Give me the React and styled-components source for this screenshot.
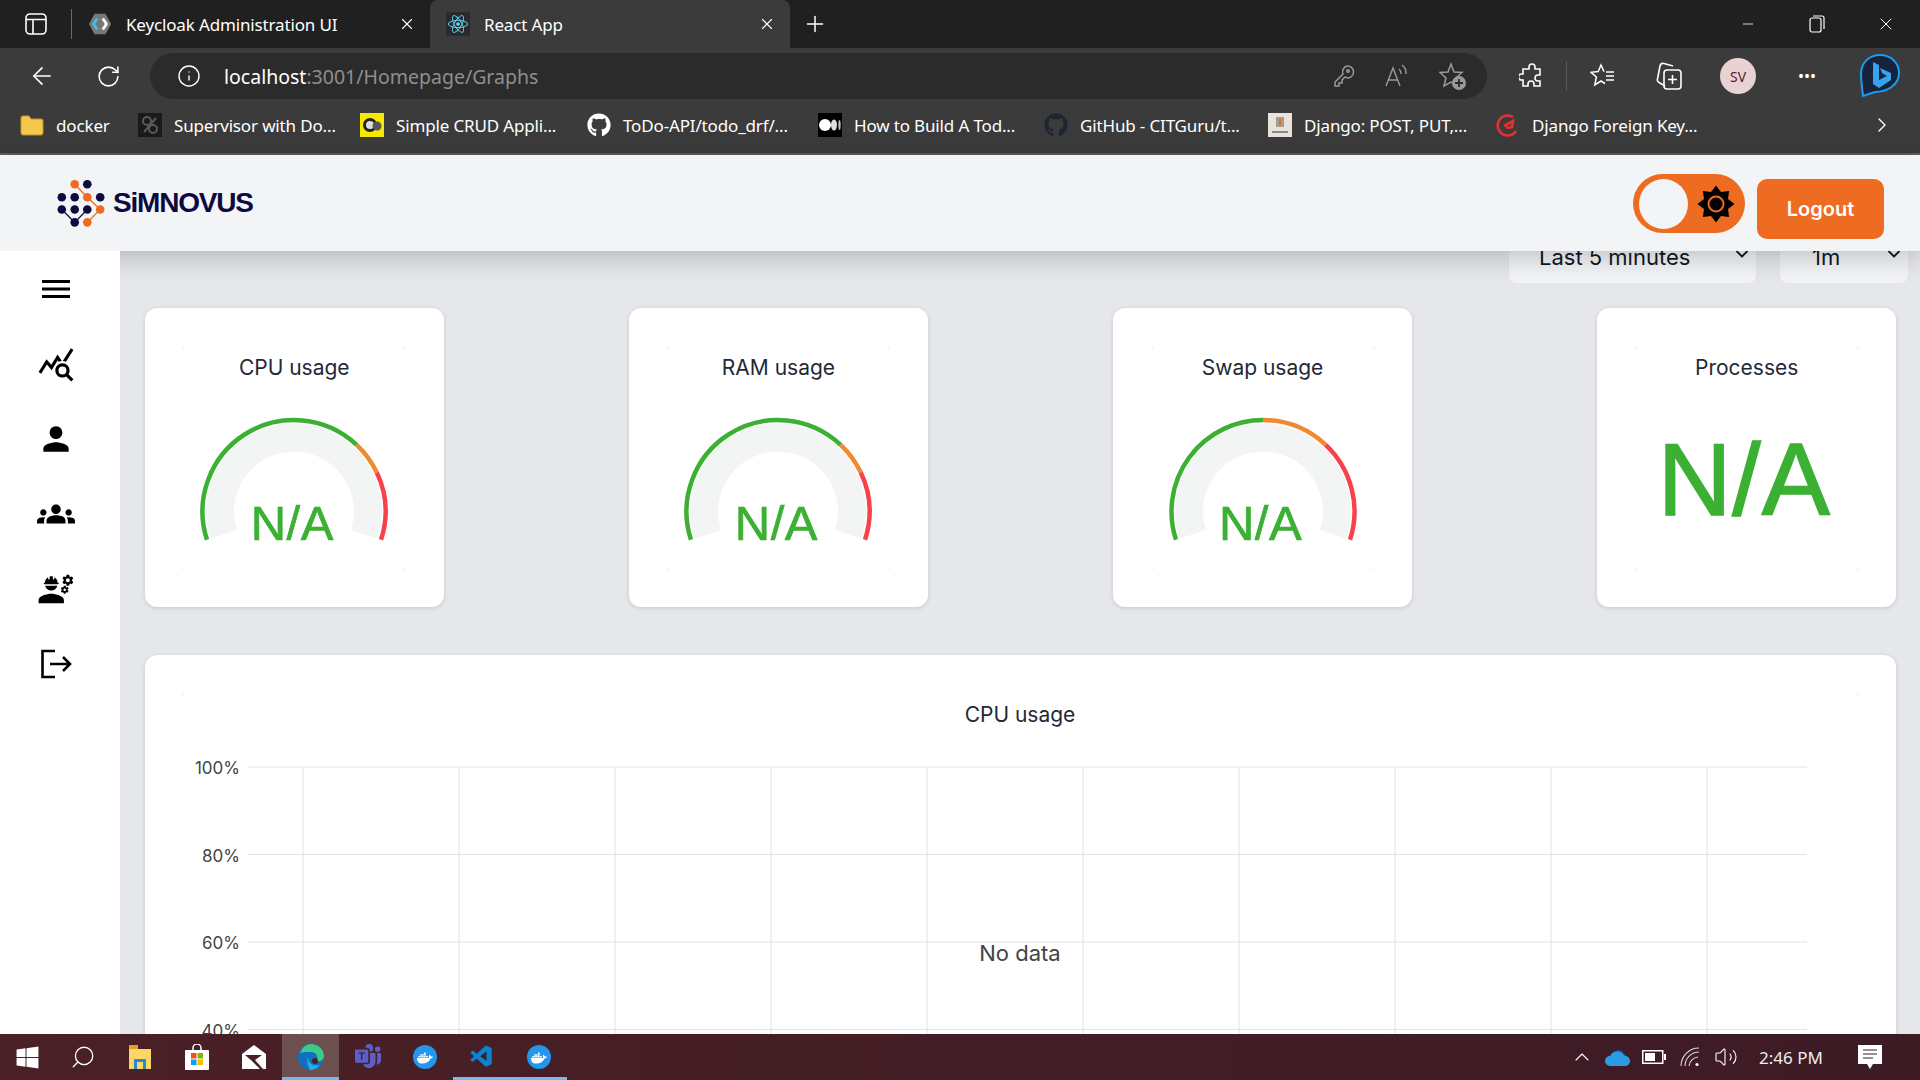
import React from "react";
import styled, { createGlobalStyle } from "styled-components";
import { ArrowLeft, RotateCw, Info, X, Plus, Minus, ChevronRight, ChevronDown, ChevronUp, Search, Volume2 } from "lucide-react";
import { FaGithub, FaWindows, FaDocker, FaReact } from "react-icons/fa";
import { BsMicrosoftTeams } from "react-icons/bs";
import { MdQueryStats, MdPerson, MdGroups, MdEngineering } from "react-icons/md";
import { VscVscode } from "react-icons/vsc";

const GlobalStyle = createGlobalStyle`
  html, body {
    margin: 0;
    padding: 0;
    background: #e5e7eb;
  }
  * {
    box-sizing: border-box;
  }
`;

const Screen = styled.div`
  width: 1920px;
  height: 1080px;
  display: flex;
  flex-direction: column;
  overflow: hidden;
  font-family: Inter, "Liberation Sans", sans-serif;
`;

/* browser chrome */
const Chrome = styled.div`
  flex: none;
  color: #fff;
  font-family: "Noto Sans", "Open Sans", sans-serif;
`;

const TabStrip = styled.div`
  height: 48px;
  background: #202020;
  display: flex;
  align-items: stretch;
`;

const StripIcon = styled.div`
  flex: none;
  width: ${(p) => p.$w}px;
  display: flex;
  align-items: center;
  justify-content: center;
`;

const Divider = styled.div`
  flex: none;
  width: 1px;
  height: 30px;
  align-self: center;
  background: ${(p) => p.$color || "#6a6a6a"};
`;

const Tab = styled.div`
  flex: none;
  width: ${(p) => p.$w}px;
  display: flex;
  align-items: center;
  gap: 14px;
  padding: 0 14px 0 16px;
  border-radius: 8px 8px 0 0;
  background: ${(p) => (p.$active ? "#3b3b3b" : "transparent")};
`;

const TabTitle = styled.span`
  flex: 1;
  font-size: 17px;
  letter-spacing: -0.15px;
  white-space: nowrap;
`;

const WindowControls = styled.div`
  margin-left: auto;
  display: flex;
`;

const WindowButton = styled.div`
  width: 69px;
  display: flex;
  align-items: center;
  justify-content: center;
`;

const Toolbar = styled.div`
  height: 52px;
  padding-top: 4px;
  background: #3b3b3b;
  display: flex;
  align-items: center;
`;

const ToolSlot = styled.div`
  flex: none;
  width: ${(p) => p.$w}px;
  display: flex;
  align-items: center;
  justify-content: center;
`;

const AddressBar = styled.div`
  flex: none;
  width: 1337px;
  height: 46px;
  border-radius: 23px;
  background: #2b2b2b;
  display: flex;
  align-items: center;
  padding-left: 27px;
  padding-right: 20px;
`;

const UrlText = styled.div`
  margin-left: 23px;
  font-size: 19.5px;
  color: #8f8f8f;
  flex: 1;
  span {
    color: #fff;
  }
`;

const AddressActions = styled.div`
  display: flex;
  align-items: center;
  gap: 29px;
  color: #9a9a9a;
`;

const Avatar = styled.div`
  width: 36px;
  height: 36px;
  border-radius: 50%;
  background: #e8d2d4;
  color: #5a1a28;
  font-size: 14px;
  display: flex;
  align-items: center;
  justify-content: center;
`;

const BookmarkBar = styled.div`
  height: 55px;
  padding-bottom: 3px;
  background: #3b3b3b;
  border-bottom: 2px solid #5c5c5c;
  display: flex;
  align-items: center;
  padding-left: 20px;
`;

const Bookmark = styled.div`
  flex: none;
  width: ${(p) => p.$w}px;
  display: flex;
  align-items: center;
  gap: 12px;
`;

const BookmarkIcon = styled.div`
  flex: none;
  width: 24px;
  height: 24px;
  display: flex;
  align-items: center;
  justify-content: center;
  background: ${(p) => p.$bg || "transparent"};
  color: ${(p) => p.$color || "#fff"};
`;

const BookmarkLabel = styled.span`
  font-size: 17px;
  letter-spacing: -0.15px;
  white-space: nowrap;
`;

const BarEnd = styled.div`
  margin-left: auto;
  width: 76px;
  display: flex;
  justify-content: center;
`;

/* app header */
const Header = styled.header`
  flex: none;
  position: relative;
  z-index: 2;
  height: 96px;
  background: #f3f4f6;
  box-shadow: 0 6px 26px rgba(0, 0, 0, 0.22);
  display: flex;
  align-items: center;
  justify-content: space-between;
  padding: 0 36px 0 56px;
`;

const Brand = styled.div`
  display: flex;
  align-items: center;
  gap: 7px;
`;

const BrandName = styled.span`
  font-family: "Liberation Sans", sans-serif;
  font-weight: 700;
  font-size: 28px;
  letter-spacing: -1.2px;
  color: #0c0a3e;
`;

const HeaderActions = styled.div`
  display: flex;
  align-items: flex-start;
  gap: 12px;
  margin-top: 7px;
`;

const ThemeToggle = styled.div`
  width: 112px;
  height: 59px;
  border-radius: 30px;
  background: #ee6c22;
  display: flex;
  align-items: center;
  justify-content: space-between;
  padding: 0 10px 0 6px;
`;

const ToggleKnob = styled.div`
  width: 49px;
  height: 50px;
  border-radius: 50%;
  background: #f3f4f6;
`;

const LogoutButton = styled.button`
  width: 127px;
  height: 60px;
  margin-top: 5px;
  border: 0;
  border-radius: 10px;
  background: #ee6c22;
  color: #fff;
  font-family: Inter, sans-serif;
  font-size: 20px;
  font-weight: 600;
`;

/* page body */
const Body = styled.div`
  flex: 1;
  min-height: 0;
  display: flex;
`;

const Sidebar = styled.nav`
  flex: none;
  position: relative;
  z-index: 3;
  width: 120px;
  padding-right: 8px;
  background: #fff;
  display: flex;
  flex-direction: column;
`;

const SideItem = styled.div`
  height: 75px;
  display: flex;
  align-items: center;
  justify-content: center;
  color: #000;
`;

const Main = styled.main`
  flex: 1;
  min-width: 0;
  overflow: hidden;
  background: #e5e7eb;
`;

const FilterRow = styled.div`
  display: flex;
  justify-content: flex-end;
  gap: 24px;
  margin-top: -20px;
  padding-right: 12px;
`;

const Filter = styled.div`
  width: ${(p) => p.$w}px;
  height: 52px;
  border-radius: 8px;
  background: #f3f4f6;
  color: #111827;
  display: flex;
  align-items: center;
  justify-content: space-between;
  padding: 0 4px 0 ${(p) => p.$pad}px;
  font-size: 22px;
  svg {
    margin-top: -7px;
  }
`;

const CardRow = styled.div`
  display: flex;
  justify-content: space-between;
  margin-top: 25px;
  padding: 0 24px 0 25px;
`;

const Card = styled.section`
  width: 298.5px;
  height: 299px;
  border-radius: 12px;
  background: #fff;
  box-shadow: 0 1px 4px rgba(0, 0, 0, 0.14);
  display: flex;
  align-items: center;
  justify-content: center;
`;

const CardFrame = styled.div`
  position: relative;
  width: 224px;
  height: 224px;
  display: flex;
  flex-direction: column;
  align-items: center;
  background:
    linear-gradient(#f8f8f8, #f8f8f8) 0 0 / 3px 3px no-repeat,
    linear-gradient(#f8f8f8, #f8f8f8) 100% 0 / 3px 3px no-repeat,
    linear-gradient(#f8f8f8, #f8f8f8) 0 100% / 3px 3px no-repeat,
    linear-gradient(#f8f8f8, #f8f8f8) 100% 100% / 3px 3px no-repeat;
`;

const CardTitle = styled.h3`
  margin: 10px 0 0;
  font-size: 21px;
  font-weight: 400;
  line-height: 24px;
  color: #1f2937;
`;

const GaugeWrap = styled.div`
  position: relative;
  width: 200px;
  height: 140px;
  margin-top: 30px;
`;

const GaugeValue = styled.div`
  position: absolute;
  left: 0;
  right: 4px;
  top: 89px;
  text-align: center;
  font-family: "Liberation Sans", sans-serif;
  font-size: 49px;
  line-height: 48px;
  letter-spacing: 0.5px;
  -webkit-text-stroke: 0.7px #3bb033;
  color: #3bb033;
`;

const BigValue = styled.div`
  margin-top: 50px;
  margin-right: 5px;
  font-family: "Liberation Sans", sans-serif;
  font-size: 102px;
  line-height: 100px;
  letter-spacing: 1px;
  -webkit-text-stroke: 1.6px #3bb033;
  color: #3bb033;
`;

const ChartCard = styled.section`
  margin: 48px 24px 0 25px;
  height: 640px;
  border-radius: 12px;
  background:
    linear-gradient(#f8f8f8, #f8f8f8) 37px 38px / 3px 3px no-repeat,
    linear-gradient(#f8f8f8, #f8f8f8) 1711px 38px / 3px 3px no-repeat,
    #fff;
  box-shadow: 0 1px 4px rgba(0, 0, 0, 0.14);
`;

const ChartTitle = styled.h3`
  margin: 0;
  padding: 48px 0 0 0;
  width: 1750px;
  text-align: center;
  font-size: 21px;
  font-weight: 400;
  line-height: 24px;
  color: #1f2937;
`;

const ChartSvg = styled.svg`
  display: block;
  margin-top: 12px;
  text {
    font-family: Inter, sans-serif;
    fill: #444;
  }
`;

/* windows taskbar */
const Taskbar = styled.footer`
  flex: none;
  position: relative;
  z-index: 4;
  height: 46px;
  background: linear-gradient(90deg, #4a2026, #3d1b25);
  display: flex;
  align-items: stretch;
  color: #fff;
  font-family: "Noto Sans", "Open Sans", sans-serif;
`;

const TaskSlot = styled.div`
  flex: none;
  width: ${(p) => p.$w || 57}px;
  display: flex;
  align-items: center;
  justify-content: center;
  background: ${(p) => (p.$active ? "#6e4f50" : "transparent")};
  border-bottom: 3px solid ${(p) => (p.$open ? "#76b9ed" : "transparent")};
  border-top: 3px solid transparent;
`;

const SearchGlyph = styled(Search)`
  transform: scaleX(-1);
`;

const Tray = styled.div`
  margin-left: auto;
  display: flex;
  align-items: center;
`;

const TraySlot = styled.div`
  width: ${(p) => p.$w}px;
  display: flex;
  align-items: center;
  justify-content: center;
`;

const Clock = styled.div`
  width: 94px;
  text-align: center;
  font-size: 17px;
  color: #eee;
`;

const polar = (r, deg) => {
  const a = ((deg - 90) * Math.PI) / 180;
  return [100 + r * Math.cos(a), 101.5 + r * Math.sin(a)];
};

const arcPath = (r, from, to) => {
  const [x1, y1] = polar(r, from);
  const [x2, y2] = polar(r, to);
  return `M${x1} ${y1}A${r} ${r} 0 ${to - from > 180 ? 1 : 0} 1 ${x2} ${y2}`;
};

const bandPath = (outer, inner, from, to) => {
  const [x1, y1] = polar(outer, from);
  const [x2, y2] = polar(outer, to);
  const [x3, y3] = polar(inner, to);
  const [x4, y4] = polar(inner, from);
  return `M${x1} ${y1}A${outer} ${outer} 0 1 1 ${x2} ${y2}L${x3} ${y3}A${inner} ${inner} 0 1 0 ${x4} ${y4}Z`;
};

const toAngle = (f) => -108 + 216 * f;

function Gauge({ green, orange }) {
  return (
    <GaugeWrap>
      <svg width="200" height="140" viewBox="0 0 200 140">
        <path d={bandPath(88, 60, -108, 108)} fill="#f3f5f5" />
        <path d={arcPath(91.5, toAngle(0), toAngle(green))} fill="none" stroke="#3bb033" strokeWidth="4.5" />
        <path d={arcPath(91.5, toAngle(green), toAngle(orange))} fill="none" stroke="#f08a32" strokeWidth="4.5" />
        <path d={arcPath(91.5, toAngle(orange), toAngle(1))} fill="none" stroke="#f7424a" strokeWidth="4.5" />
      </svg>
      <GaugeValue>N/A</GaugeValue>
    </GaugeWrap>
  );
}

function Logo() {
  const navy = "#0c0a3e";
  const orange = "#ee6c22";
  const dots = [
    [226, 86, orange], [264, 86, navy],
    [187, 125, navy], [226, 125, navy], [264, 125, orange], [303, 125, navy],
    [187, 162, navy], [226, 162, navy], [264, 162, navy], [303, 162, orange],
    [226, 201, navy], [264, 201, orange],
  ];
  return (
    <svg width="50" height="48" viewBox="170 70 150 145">
      <path d="M226 86L264 125L303 162L264 201" fill="none" stroke={orange} strokeWidth="4" />
      <path d="M187 162L226 201L264 162" fill="none" stroke={navy} strokeWidth="4" />
      {dots.map(([x, y, c]) => (
        <circle key={`${x}-${y}`} cx={x} cy={y} r="13" fill={c} />
      ))}
    </svg>
  );
}

function SunIcon() {
  const points = [];
  for (let i = 0; i < 16; i++) {
    const r = i % 2 ? 13 : 18.5;
    const a = (i * Math.PI) / 8 - Math.PI / 2;
    points.push(`${19 + r * Math.cos(a)},${19 + r * Math.sin(a)}`);
  }
  return (
    <svg width="38" height="38" viewBox="0 0 38 38">
      <polygon points={points.join(" ")} fill="#000" />
      <circle cx="19" cy="19" r="7.5" fill="none" stroke="#ee6c22" strokeWidth="2" />
    </svg>
  );
}

const BarsIcon = () => (
  <svg width="28" height="18" viewBox="0 0 28 18">
    <path d="M0 1.5H28M0 9H28M0 16.5H28" stroke="#000" strokeWidth="3" />
  </svg>
);

const ExitIcon = () => (
  <svg width="32" height="30" viewBox="0 0 32 30" fill="none" stroke="#000" strokeWidth="2.6">
    <path d="M15 2H2.5V28H15" />
    <path d="M10 15H30M23 8l7 7-7 7" />
  </svg>
);

const TabsIcon = () => (
  <svg width="22" height="22" viewBox="0 0 22 22" fill="none" stroke="#fff" strokeWidth="1.6">
    <rect x="1" y="1" width="20" height="20" rx="4" />
    <path d="M1 6.5H21M8 6.5V21" />
  </svg>
);

const KeycloakIcon = () => (
  <svg width="24" height="24" viewBox="0 0 26 24">
    <path d="M7 1H19L25 12L19 23H7L1 12Z" fill="#777" />
    <path d="M10 6L6 12L10 18" fill="none" stroke="#3fc1ea" strokeWidth="3" />
    <path d="M16 6L20 12L16 18" fill="none" stroke="#fff" strokeWidth="3" />
  </svg>
);

const RestoreIcon = () => (
  <svg width="16" height="18" viewBox="0 0 16 18" fill="none" stroke="#fff" strokeWidth="1.2">
    <rect x="1" y="3" width="11" height="14" rx="2" />
    <path d="M4 1H13a2 2 0 0 1 2 2V14" />
  </svg>
);

const KeyIcon = () => (
  <svg width="22" height="24" viewBox="0 0 22 24" fill="none" stroke="#9a9a9a" strokeWidth="1.5">
    <path d="M14 2a6 6 0 0 1 1 12a6 6 0 0 1-3-1l-3 3v3H6v3H2v-4l8-8a6 6 0 0 1 4-8z" />
    <circle cx="15" cy="7" r="1.2" />
  </svg>
);

const ReadIcon = () => (
  <svg width="26" height="26" viewBox="0 0 26 26" fill="none" stroke="#9a9a9a" strokeWidth="1.4">
    <path d="M2 23L9 5L16 23M4.5 17H13.5" />
    <path d="M15 6a6 6 0 0 1 2 5M18 2a10 10 0 0 1 4 9" />
  </svg>
);

const FavAddIcon = () => (
  <svg width="28" height="28" viewBox="0 0 28 28">
    <path d="M12 2L15 10L23 10.5L17 16L19 24L12 20L5 24L7 16L1 10.5L9 10Z" fill="none" stroke="#9a9a9a" strokeWidth="1.5" />
    <circle cx="20" cy="21" r="7" fill="#9a9a9a" />
    <path d="M20 17V25M16 21H24" stroke="#2b2b2b" strokeWidth="1.8" />
  </svg>
);

const PuzzleIcon = () => (
  <svg width="24" height="26" viewBox="0 0 24 26" fill="none" stroke="#fff" strokeWidth="1.6">
    <path d="M10 4a3 3 0 0 1 6 0v2h5v6h-2a3 3 0 0 0 0 6h2v5h-6v-2a3 3 0 0 0-6 0v2H4v-6H2.5a3 3 0 0 1 0-6H4V6h6z" />
  </svg>
);

const FavoritesIcon = () => (
  <svg width="26" height="26" viewBox="0 0 26 26" fill="none" stroke="#fff" strokeWidth="1.5">
    <path d="M14 8.6L11 2L8.2 8.6L1 9.3L6.4 14L4.8 22L11 18L15 20.5" />
    <path d="M16 9H24M16 13H24M16 17H24" />
  </svg>
);

const CollectionsIcon = () => (
  <svg width="26" height="28" viewBox="0 0 26 28" fill="none" stroke="#fff" strokeWidth="1.6">
    <path d="M9 24L3 20.5C1.5 19.5 1 18 1.5 17L4 4C4.5 2 6 1 8 1.5L17 4" />
    <rect x="8" y="8" width="17" height="19" rx="3" />
    <path d="M16.5 13V22M12 17.5H21" />
  </svg>
);

const BingIcon = () => (
  <svg width="46" height="46" viewBox="0 0 46 46">
    <path d="M23 2C12 2 4 10 4 21C4 28 5 34 6 43L18 39C30 39 42 32 42 20C42 10 34 2 23 2Z" fill="#16233a" stroke="#1d9bf0" strokeWidth="2" />
    <path d="M16 9L22 12V27L30 23L25 20L23 15L34 20V27L22 35L16 31Z" fill="#36a3ec" />
  </svg>
);

const FolderIcon = () => (
  <svg width="24" height="24" viewBox="0 0 24 24">
    <path d="M1 5a2 2 0 0 1 2-2h6l2 3h10a2 2 0 0 1 2 2v12a2 2 0 0 1-2 2H3a2 2 0 0 1-2-2z" fill="#f2c94c" stroke="#c8922a" />
  </svg>
);

const SupervisorIcon = () => (
  <svg width="24" height="24" viewBox="0 0 24 24" fill="none" stroke="#5a5a5a" strokeWidth="2">
    <circle cx="9" cy="8" r="4" />
    <circle cx="15" cy="16" r="4" />
    <path d="M6 19L18 5" />
  </svg>
);

const CrudIcon = () => (
  <svg width="20" height="18" viewBox="0 0 20 18">
    <circle cx="8" cy="9" r="7" fill="#222" />
    <circle cx="8" cy="9" r="4" fill="#ddd" />
    <circle cx="15" cy="10" r="4.5" fill="#555" />
  </svg>
);

const MediumIcon = () => (
  <svg width="22" height="12" viewBox="0 0 22 12">
    <ellipse cx="6" cy="6" rx="6" ry="6" fill="#fff" />
    <ellipse cx="15" cy="6" rx="3" ry="5.5" fill="#ddd" />
    <ellipse cx="20.5" cy="6" rx="1.2" ry="5" fill="#bbb" />
  </svg>
);

const DjangoPostIcon = () => (
  <svg width="24" height="24" viewBox="0 0 24 24">
    <rect width="24" height="24" fill="#e8e4da" />
    <rect x="8" y="4" width="8" height="10" fill="#a89a8a" />
    <rect x="11" y="6" width="2" height="6" fill="#d9703a" />
    <rect x="4" y="18" width="16" height="2" fill="#888" />
  </svg>
);

const DjangoKeyIcon = () => (
  <svg width="24" height="24" viewBox="0 0 24 24" fill="none" stroke="#e5322f" strokeWidth="2.6">
    <path d="M17 4a10 10 0 1 0 3 14" />
    <path d="M8 13l9-5-1 6-6 1" />
  </svg>
);

const ExplorerIcon = () => (
  <svg width="24" height="26" viewBox="0 0 24 26">
    <path d="M1 1H10V7H1Z" fill="#e2a21b" />
    <path d="M1 5H23V25H1Z" fill="#fbd865" />
    <path d="M6 25V15H18V25H15V18H9V25Z" fill="#2a86d6" />
  </svg>
);

const StoreIcon = () => (
  <svg width="24" height="26" viewBox="0 0 24 26">
    <path d="M8 7V4a4 4 0 0 1 8 0v3" fill="none" stroke="#fff" strokeWidth="1.5" />
    <rect y="6" width="24" height="20" rx="1" fill="#fff" />
    <rect x="6" y="9" width="5.5" height="5.5" fill="#f25022" />
    <rect x="12.5" y="9" width="5.5" height="5.5" fill="#7fba00" />
    <rect x="6" y="15.5" width="5.5" height="5.5" fill="#00a4ef" />
    <rect x="12.5" y="15.5" width="5.5" height="5.5" fill="#ffb900" />
  </svg>
);

const MailIcon = () => (
  <svg width="24" height="24" viewBox="0 0 24 24">
    <path d="M0 9L12 0L24 9V24H0Z" fill="#fff" />
    <path d="M3 10L20 10L13 15L21 24H18L10 16Z" fill="#4a2026" />
  </svg>
);

const EdgeIcon = () => (
  <svg width="26" height="26" viewBox="0 0 26 26">
    <circle cx="13" cy="13" r="13" fill="#0f6fc0" />
    <path d="M2 9C4 3 9 0 13 0C20 0 26 5 26 12C26 16 22 18 18 17C21 14 19 8 13 8C8 8 4 8 2 9Z" fill="#3ec88a" />
    <path d="M10 13C10 19 15 23 22 21C19 25 15 26 12 26C10 22 8 17 10 13Z" fill="#1faee9" />
    <circle cx="17" cy="17" r="3" fill="#4a2026" />
  </svg>
);

const DockerBadge = () => (
  <svg width="24" height="24" viewBox="0 0 24 24">
    <circle cx="12" cy="12" r="12" fill="#2396ed" />
    <foreignObject x="4" y="4" width="16" height="16">
      <FaDocker size={16} color="#fff" />
    </foreignObject>
  </svg>
);

const CloudIcon = () => (
  <svg width="26" height="18" viewBox="0 0 26 18">
    <path d="M6 8a7 7 0 0 1 13-2a6 6 0 0 1 3 4L8 12Z" fill="#0f6cbd" />
    <path d="M5 18a5 5 0 0 1 0-10a8 8 0 0 1 14 0a5 5 0 0 1 2 10Z" fill="#2a9be4" />
  </svg>
);

const BatteryIcon = () => (
  <svg width="24" height="14" viewBox="0 0 24 14">
    <rect x="0.75" y="0.75" width="20" height="12.5" fill="none" stroke="#fff" strokeWidth="1.5" />
    <rect x="3" y="3" width="10" height="8" fill="#fff" />
    <rect x="22" y="4" width="2" height="6" fill="#fff" />
  </svg>
);

const SignalIcon = () => (
  <svg width="20" height="20" viewBox="0 0 20 20" fill="none" stroke="#ddd" strokeWidth="1.1">
    <path d="M1 19a18 18 0 0 1 18-18M5 19a14 14 0 0 1 14-14M9 19a10 10 0 0 1 9-9" />
    <circle cx="17" cy="17.5" r="1.6" fill="#fff" stroke="none" />
  </svg>
);

const NoticeIcon = () => (
  <svg width="24" height="24" viewBox="0 0 24 24">
    <path d="M0 0H24V19H15L12 24L9 19H0Z" fill="#fff" />
    <path d="M5 5H19M5 9H19M5 13H15" stroke="#3d1b25" strokeWidth="1" />
  </svg>
);

const bookmarks = [
  { label: "docker", w: 118, icon: <FolderIcon /> },
  { label: "Supervisor with Do...", w: 222, bg: "#1a1a1a", icon: <SupervisorIcon /> },
  { label: "Simple CRUD Appli...", w: 227, bg: "#f4ea00", icon: <CrudIcon /> },
  { label: "ToDo-API/todo_drf/...", w: 231, icon: <FaGithub size={24} /> },
  { label: "How to Build A Tod...", w: 226, bg: "#000", icon: <MediumIcon /> },
  { label: "GitHub - CITGuru/t...", w: 224, color: "#1c2733", icon: <FaGithub size={24} /> },
  { label: "Django: POST, PUT,...", w: 228, icon: <DjangoPostIcon /> },
  { label: "Django Foreign Key...", w: 220, icon: <DjangoKeyIcon /> },
];

const ticks = ["100%", "80%", "60%", "40%", "20%", "0%"];
const columns = [303, 459, 615, 771, 927, 1083, 1239, 1395, 1551, 1707];

export default function App() {
  return (
    <Screen>
      <GlobalStyle />
      <Chrome>
        <TabStrip>
          <StripIcon $w={71}><TabsIcon /></StripIcon>
          <Divider />
          <Tab $w={358}>
            <KeycloakIcon />
            <TabTitle>Keycloak Administration UI</TabTitle>
            <X size={18} strokeWidth={1.5} />
          </Tab>
          <Tab $w={360} $active>
            <BookmarkIcon $bg="#2a2a2a" $color="#61dafb"><FaReact size={20} /></BookmarkIcon>
            <TabTitle>React App</TabTitle>
            <X size={18} strokeWidth={1.5} />
          </Tab>
          <StripIcon $w={50}><Plus size={26} strokeWidth={1.4} /></StripIcon>
          <WindowControls>
            <WindowButton><Minus size={16} strokeWidth={1.2} /></WindowButton>
            <WindowButton><RestoreIcon /></WindowButton>
            <WindowButton><X size={20} strokeWidth={1.2} /></WindowButton>
          </WindowControls>
        </TabStrip>
        <Toolbar>
          <ToolSlot $w={84}><ArrowLeft size={28} strokeWidth={1.4} /></ToolSlot>
          <ToolSlot $w={48}><RotateCw size={25} strokeWidth={1.5} /></ToolSlot>
          <ToolSlot $w={18} />
          <AddressBar>
            <Info size={24} strokeWidth={1.4} />
            <UrlText><span>localhost</span>:3001/Homepage/Graphs</UrlText>
            <AddressActions>
              <KeyIcon />
              <ReadIcon />
              <FavAddIcon />
            </AddressActions>
          </AddressBar>
          <ToolSlot $w={8} />
          <ToolSlot $w={71}><PuzzleIcon /></ToolSlot>
          <Divider $color="#5c5c5c" />
          <ToolSlot $w={72}><FavoritesIcon /></ToolSlot>
          <ToolSlot $w={60}><CollectionsIcon /></ToolSlot>
          <ToolSlot $w={78}><Avatar>SV</Avatar></ToolSlot>
          <ToolSlot $w={60}>•••</ToolSlot>
          <ToolSlot $w={86}><BingIcon /></ToolSlot>
        </Toolbar>
        <BookmarkBar>
          {bookmarks.map((b) => (
            <Bookmark key={b.label} $w={b.w}>
              <BookmarkIcon $bg={b.bg} $color={b.color}>{b.icon}</BookmarkIcon>
              <BookmarkLabel>{b.label}</BookmarkLabel>
            </Bookmark>
          ))}
          <BarEnd><ChevronRight size={24} strokeWidth={1.4} /></BarEnd>
        </BookmarkBar>
      </Chrome>

      <Header>
        <Brand>
          <Logo />
          <BrandName>SiMNOVUS</BrandName>
        </Brand>
        <HeaderActions>
          <ThemeToggle>
            <ToggleKnob />
            <SunIcon />
          </ThemeToggle>
          <LogoutButton>Logout</LogoutButton>
        </HeaderActions>
      </Header>

      <Body>
        <Sidebar>
          <SideItem><BarsIcon /></SideItem>
          <SideItem><MdQueryStats size={38} /></SideItem>
          <SideItem><MdPerson size={38} /></SideItem>
          <SideItem><MdGroups size={38} /></SideItem>
          <SideItem><MdEngineering size={38} /></SideItem>
          <SideItem><ExitIcon /></SideItem>
        </Sidebar>
        <Main>
          <FilterRow>
            <Filter $w={247} $pad={30}>
              Last 5 minutes
              <ChevronDown size={20} strokeWidth={2.2} />
            </Filter>
            <Filter $w={128} $pad={32}>
              1m
              <ChevronDown size={20} strokeWidth={2.2} />
            </Filter>
          </FilterRow>
          <CardRow>
            <Card>
              <CardFrame>
                <CardTitle>CPU usage</CardTitle>
                <Gauge green={0.7} orange={0.8} />
              </CardFrame>
            </Card>
            <Card>
              <CardFrame>
                <CardTitle>RAM usage</CardTitle>
                <Gauge green={0.7} orange={0.8} />
              </CardFrame>
            </Card>
            <Card>
              <CardFrame>
                <CardTitle>Swap usage</CardTitle>
                <Gauge green={0.5} orange={0.7} />
              </CardFrame>
            </Card>
            <Card>
              <CardFrame>
                <CardTitle>Processes</CardTitle>
                <BigValue>N/A</BigValue>
              </CardFrame>
            </Card>
          </CardRow>
          <ChartCard>
            <ChartTitle>CPU usage</ChartTitle>
            <ChartSvg width="1751" height="520" viewBox="145 739 1751 520">
              {ticks.map((t, i) => (
                <g key={t}>
                  <line x1="248" x2="1807" y1={767 + i * 87.5} y2={767 + i * 87.5} stroke="#e3e3e3" />
                  <text x="240" y={767 + i * 87.5 + 7} textAnchor="end" fontSize="17">{t}</text>
                </g>
              ))}
              {columns.map((x) => (
                <line key={x} x1={x} x2={x} y1="767" y2="1205" stroke="#e3e3e3" />
              ))}
              <text x="1020" y="961" textAnchor="middle" fontSize="22">No data</text>
            </ChartSvg>
          </ChartCard>
        </Main>
      </Body>

      <Taskbar>
        <TaskSlot $w={54}><FaWindows size={25} /></TaskSlot>
        <TaskSlot><SearchGlyph size={26} strokeWidth={1.2} /></TaskSlot>
        <TaskSlot><ExplorerIcon /></TaskSlot>
        <TaskSlot><StoreIcon /></TaskSlot>
        <TaskSlot><MailIcon /></TaskSlot>
        <TaskSlot $active $open><EdgeIcon /></TaskSlot>
        <TaskSlot><BsMicrosoftTeams size={26} color="#5b5fc7" /></TaskSlot>
        <TaskSlot><DockerBadge /></TaskSlot>
        <TaskSlot $open><VscVscode size={26} color="#0a84d0" /></TaskSlot>
        <TaskSlot $open><DockerBadge /></TaskSlot>
        <Tray>
          <TraySlot $w={36}><ChevronUp size={24} strokeWidth={1.1} /></TraySlot>
          <TraySlot $w={36}><CloudIcon /></TraySlot>
          <TraySlot $w={36}><BatteryIcon /></TraySlot>
          <TraySlot $w={36}><SignalIcon /></TraySlot>
          <TraySlot $w={36}><Volume2 size={24} strokeWidth={1.1} /></TraySlot>
          <Clock>2:46 PM</Clock>
          <TraySlot $w={64}><NoticeIcon /></TraySlot>
          <TraySlot $w={18} />
        </Tray>
      </Taskbar>
    </Screen>
  );
}
